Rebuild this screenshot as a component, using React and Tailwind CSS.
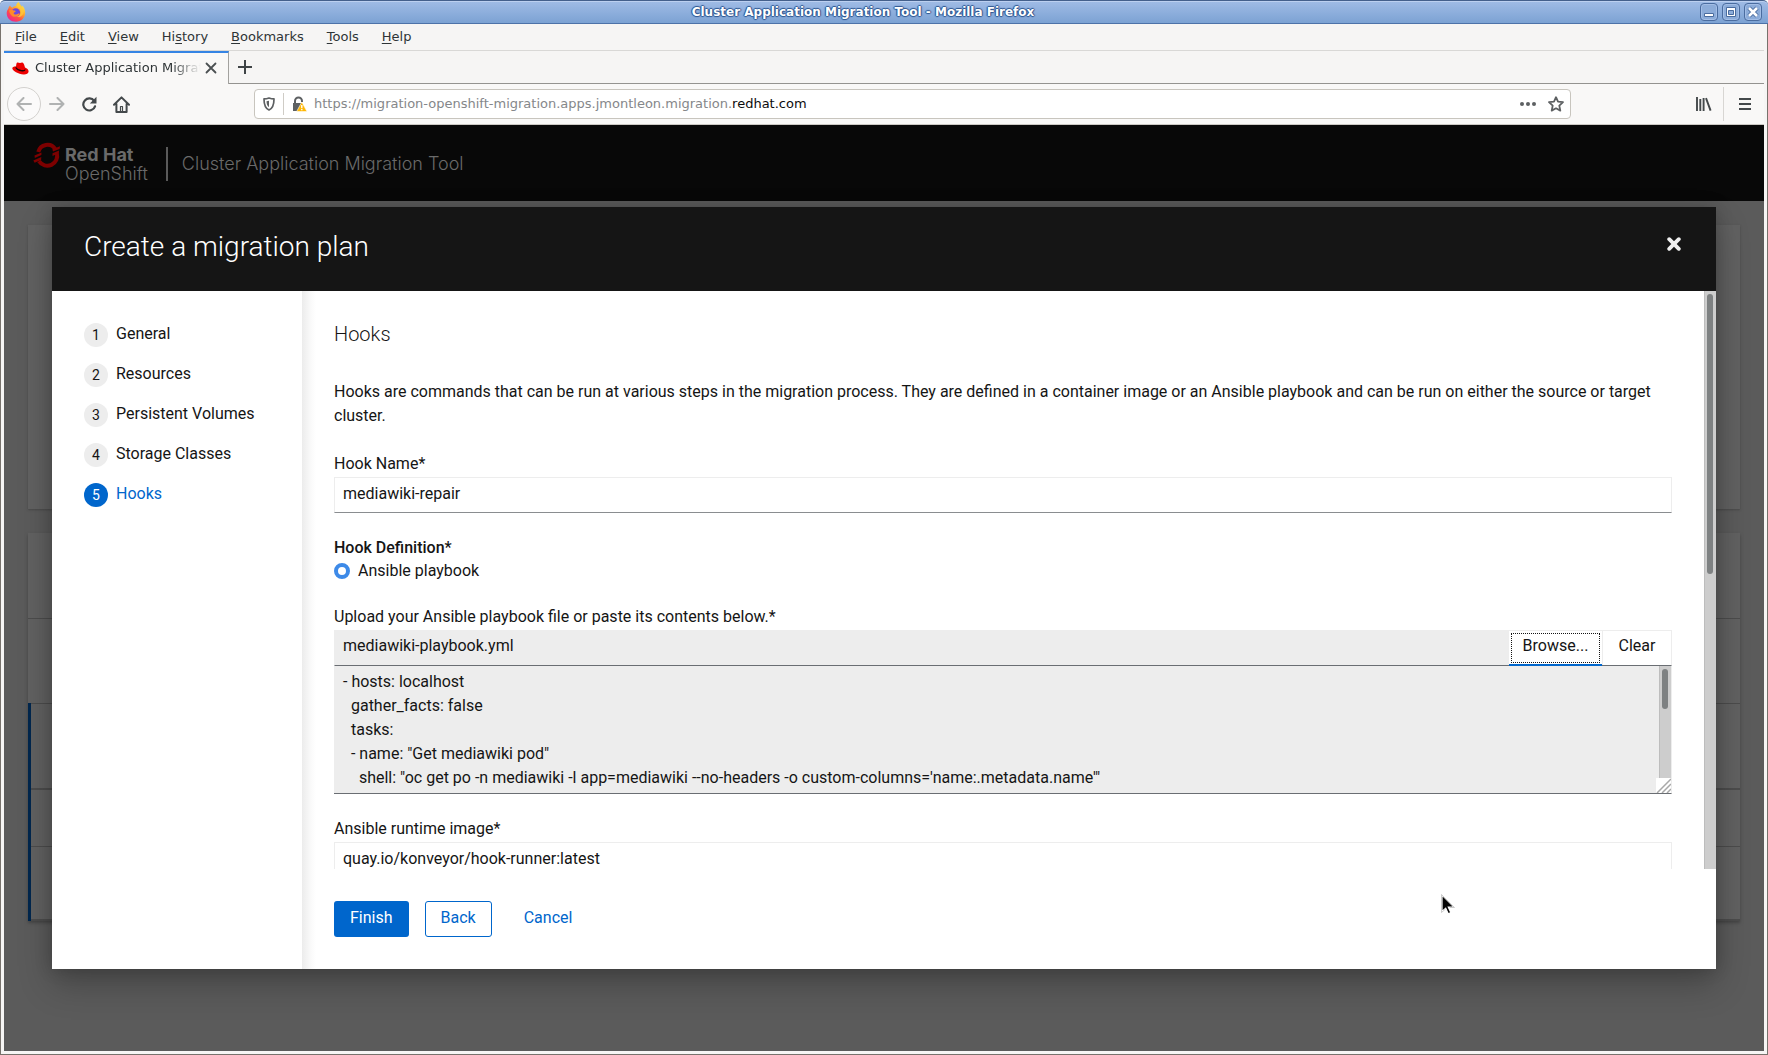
import { useState } from "react";

const menus = [
  ["", "F", "ile"],
  ["", "E", "dit"],
  ["", "V", "iew"],
  ["Hi", "s", "tory"],
  ["", "B", "ookmarks"],
  ["", "T", "ools"],
  ["", "H", "elp"],
];

const steps = ["General", "Resources", "Persistent Volumes", "Storage Classes", "Hooks"];

const playbook = `- hosts: localhost
  gather_facts: false
  tasks:
  - name: "Get mediawiki pod"
    shell: "oc get po -n mediawiki -l app=mediawiki --no-headers -o custom-columns='name:.metadata.name'"`;

function FirefoxLogo() {
  return (
    <svg width="20" height="20" viewBox="0 0 20 20" aria-hidden="true">
      <defs>
        <linearGradient id="flame" x1="0.85" y1="0.1" x2="0.25" y2="0.95">
          <stop offset="0" stopColor="#fff04a" />
          <stop offset="0.4" stopColor="#ffa22c" />
          <stop offset="0.7" stopColor="#ff4d47" />
          <stop offset="1" stopColor="#f0288c" />
        </linearGradient>
        <radialGradient id="globe" cx="0.5" cy="0.4" r="0.6">
          <stop offset="0" stopColor="#5a55ea" />
          <stop offset="1" stopColor="#8a38c8" />
        </radialGradient>
      </defs>
      <path d="M4 3.6C3 4.700 2.600 5.500 2.400 6.500 1.300 8 .700 9.600.700 11.200c0 5 4.200 8.500 9.300 8.500s9.200-3.900 9.200-9c0-3-1.300-5.700-3.200-7.100.2.900.2 1.500 0 2.200C15.200 3.600 12.900 2.400 12.700 0c-1.600.900-2.500 2.400-2.500 4.100-2 0-3.200.900-3.700 1.600C5.600 5.500 4.500 4.700 4 3.600z" fill="url(#flame)" />
      <circle cx="9.800" cy="10.500" r="4.300" fill="url(#globe)" />
      <path d="M3 8.300c1.800-.9 3.600-.6 4.600.2 1 .1 2.100.3 2.100.8 0 .8-1.700 1-2 1.700-.2 1 1 1.700 2.300 1.500 1.600-.2 2.300-1.300 3.700-.8-1 2.800-4.600 4-7.300 2.500C4.300 12.900 3.300 10.600 3 8.300z" fill="#ff8a2a" />
      <path d="M10.200 4.300c2.600.8 4.500 2.700 4.500 5.600 0 2.300-1.600 4.400-4 4.900 4.400 1.300 7.400-2.500 7-6.300C17.400 5.400 14.900 3.400 12.700.5c-1.400 1-2.300 2.200-2.500 3.800z" fill="#ffc93a" opacity=".8" />
    </svg>
  );
}

function Fedora() {
  return (
    <svg width="17" height="13" viewBox="0 0 17 13" aria-hidden="true">
      <path d="M5.200.6C6 .2 7 1 8 1c1 0 1.700-.7 2.800-.2 1.200.6 1.800 3 2.200 4.800 2 .6 3.700 2.200 3.600 4-.1 2.200-2.400 3-5 2.900C6.500 12.300.300 8.800.300 6.300c0-1.500 1.800-1.900 3.700-1.800C4.200 3 4.400 1 5.200.6z" fill="#e00" />
      <path d="M4 4.300c-.4 1.600 3.300 3.600 6.400 3.800 1.700.1 2.800-.4 2.600-1.500l.4 1.400c0 1.100-1.400 1.600-3.300 1.400C6.700 9 3.200 6.800 3.500 5.400z" fill="#200" />
    </svg>
  );
}

function OpenShiftMark() {
  return (
    <svg width="29" height="28" viewBox="0 0 29 28" fill="none" aria-hidden="true">
      <path d="M6.300 11A9.400 9.400 0 0 1 23.300 8" stroke="#7d0000" strokeWidth="4" />
      <path d="M24.800 12A9.900 9.900 0 0 1 7 20.200" stroke="#7d0000" strokeWidth="4" />
      <path d="M20.400 8.300l7.600-3-.4 2.600-6.600 2.600zM2.500 14.400l7-3-.1 2.700-6.600 2.900zM20.500 12.300l6.600-2.700-.3 2.600-6.300 2.700zM1.300 19.400l8-3.300-.2 2.900-6.500 2.800z" fill="#7d0000" />
    </svg>
  );
}

function WindowButton({ label, children }) {
  return (
    <button aria-label={label} className="grid size-[18px] place-items-center rounded-[4px] border border-[#4a6c9f] bg-[#8cacd9] shadow-[inset_0_0_0_1px_#a3bee6]">
      <svg width="12" height="12" viewBox="0 0 12 12" fill="none">{children}</svg>
    </button>
  );
}

function TitleBar() {
  return (
    <div className="flex h-6 shrink-0 items-center justify-between rounded-t-[5px] border-t border-b border-t-[#44608c] border-b-[#4d72a8] bg-linear-to-b from-[#a0bce6] to-[#7ca2d3] px-[6px] shadow-[inset_0_1px_0_#bcd0f0]">
      <FirefoxLogo />
      <div className="text-xs font-bold text-white [text-shadow:0_1px_1px_#2c5590,0_-1px_1px_#2c5590,1px_0_1px_#2c5590,-1px_0_1px_#2c5590]">
        Cluster Application Migration Tool - Mozilla Firefox
      </div>
      <div className="flex gap-1">
        <WindowButton label="Minimize">
          <path d="M1.500 7.500h9v3h-9z" fill="#fff" stroke="#4a6c9f" />
        </WindowButton>
        <WindowButton label="Maximize">
          <path d="M1.500 1.500h9v9h-9z" fill="#fff" stroke="#4a6c9f" />
          <path d="M3.500 4.500h5v4h-5z" fill="#8cacd9" stroke="#4a6c9f" />
        </WindowButton>
        <WindowButton label="Close">
          <path d="M2 2l8 8M10 2l-8 8" stroke="#4a6c9f" strokeWidth="4.500" />
          <path d="M2 2l8 8M10 2l-8 8" stroke="#fff" strokeWidth="2.600" />
        </WindowButton>
      </div>
    </div>
  );
}

function MenuBar() {
  return (
    <nav className="flex h-[27px] shrink-0 items-center gap-[23px] border-b border-[#d9d8d6] pl-[11px] text-[13px] text-[#2e3436]">
      {menus.map(([before, key, after]) => (
        <button key={before + key + after}>
          {before}
          <span className="underline underline-offset-2">{key}</span>
          {after}
        </button>
      ))}
    </nav>
  );
}

function TabStrip() {
  return (
    <div className="flex h-[33px] shrink-0">
      <div className="flex w-[225px] items-center border-t-2 border-r border-t-[#3584e4] border-r-[#a3a29f] bg-[#f9f8f7] pb-px pl-2 text-[13px] text-[#2e3436]">
        <Fedora />
        <span className="ml-[6px] w-[166px] overflow-hidden whitespace-nowrap [mask-image:linear-gradient(to_right,black_82%,transparent_100%)]">
          Cluster Application Migration Tool
        </span>
        <button aria-label="Close tab" className="ml-1">
          <svg width="12" height="12" viewBox="0 0 12 12" stroke="#4b5052" strokeWidth="1.800" strokeLinecap="round">
            <path d="M1.500 1.500l9 9M10.500 1.500l-9 9" />
          </svg>
        </button>
      </div>
      <div className="flex flex-1 items-center border-b border-[#949390] pl-[9px]">
        <button aria-label="New tab">
          <svg width="14" height="14" viewBox="0 0 14 14" stroke="#3f4446" strokeWidth="2">
            <path d="M7 0v14M0 7h14" />
          </svg>
        </button>
      </div>
    </div>
  );
}

function Toolbar() {
  return (
    <div className="flex h-[41px] shrink-0 items-center border-b border-[#ccc9c4] bg-[#f9f8f7]">
      <div className="flex w-[250px] shrink-0 items-center pl-[3px]">
        <button aria-label="Back" className="grid size-[34px] place-items-center rounded-full border border-[#d3d1ce] bg-[#fbfafa]">
          <svg width="16" height="14" viewBox="0 0 16 14" fill="none" stroke="#b0b2b2" strokeWidth="2" strokeLinecap="round" strokeLinejoin="round">
            <path d="M15 7H1.500M7.500 1l-6 6 6 6" />
          </svg>
        </button>
        <button aria-label="Forward" className="ml-2">
          <svg width="16" height="14" viewBox="0 0 16 14" fill="none" stroke="#b0b2b2" strokeWidth="2" strokeLinecap="round" strokeLinejoin="round">
            <path d="M1 7h13.500M8.500 1l6 6-6 6" />
          </svg>
        </button>
        <button aria-label="Reload" className="ml-4">
          <svg width="16" height="16" viewBox="0 0 16 16" fill="none">
            <path d="M13.200 5A6 6 0 1 0 14 10.300" stroke="#44494b" strokeWidth="2.200" strokeLinecap="round" />
            <path d="M15.500.800v6.700H8.800z" fill="#44494b" />
          </svg>
        </button>
        <button aria-label="Home" className="ml-4">
          <svg width="17" height="17" viewBox="0 0 17 17" fill="none" stroke="#44494b" strokeWidth="2" strokeLinecap="round" strokeLinejoin="round">
            <path d="M1 8.800l7.500-7.400 7.500 7.400M3.400 8v8h10.200V8" />
            <path d="M7.500 10.500h2v5h-2z" strokeWidth="1.200" />
          </svg>
        </button>
      </div>
      <div className="flex h-[30px] flex-1 items-center rounded-[4px] border border-[#c8c5be] bg-white pr-[6px] pl-2">
        <svg width="12" height="14" viewBox="0 0 12 14" fill="none" aria-hidden="true">
          <path d="M6 1c1.700.6 3.300.9 5 .9 0 5-.5 9-5 11.100C1.500 10.900 1 6.900 1 1.900c1.700 0 3.300-.3 5-.9z" stroke="#5d6062" strokeWidth="1.700" strokeLinejoin="round" />
          <path d="M6 3.700v6.600C4 8.800 3.600 6.700 3.500 4.200z" fill="#5d6062" />
        </svg>
        <div className="mx-2 h-[22px] w-px bg-[#cfccc6]" />
        <svg width="15" height="16" viewBox="0 0 15 16" fill="none" aria-hidden="true">
          <path d="M3 8V5a3.500 3.500 0 0 1 7 0v1" stroke="#5d6062" strokeWidth="2" />
          <path d="M1 7h8v8H1z" fill="#5d6062" />
          <path d="M9.800 6L15 15.600H4.600z" fill="#ffb703" stroke="#fff" strokeWidth=".6" />
          <path d="M9.800 9v3.200M9.800 13v1.300" stroke="#fff" strokeWidth="1.400" />
        </svg>
        <div className="ml-[7px] flex-1 text-[13px] whitespace-nowrap text-[#85878a]">
          https://migration-openshift-migration.apps.jmontleon.migration.<span className="text-[#0c0c0d]">redhat.com</span>
        </div>
        <button aria-label="Page actions">
          <svg width="16" height="4" viewBox="0 0 16 4" fill="#5d6062">
            <circle cx="2" cy="2" r="2" />
            <circle cx="8" cy="2" r="2" />
            <circle cx="14" cy="2" r="2" />
          </svg>
        </button>
        <button aria-label="Bookmark this page" className="ml-3">
          <svg width="16" height="16" viewBox="0 0 16 16" fill="none" stroke="#5d6062" strokeWidth="1.800" strokeLinejoin="round">
            <path d="M8 1.200l2 4.500 5 .5-3.700 3.400 1 5L8 12.300l-4.300 2.300 1-5L1 6.200l5-.5z" />
          </svg>
        </button>
      </div>
      <div className="flex w-[193px] shrink-0 items-center justify-end pr-[13px]">
        <button aria-label="Library">
          <svg width="16" height="14" viewBox="0 0 16 14" stroke="#44494b" strokeWidth="1.900">
            <path d="M1 0v14M4.300 2v12M7.600 1v13M10 1.200l4.600 12.500" />
          </svg>
        </button>
        <div className="mr-[15px] ml-[11px] h-[34px] w-px bg-[#d8d6d3]" />
        <button aria-label="Open menu">
          <svg width="12" height="12" viewBox="0 0 12 12" fill="#44494b">
            <path d="M0 0h12v2H0zM0 5h12v2H0zM0 10h12v2H0z" />
          </svg>
        </button>
      </div>
    </div>
  );
}

function Backdrop() {
  return (
    <div className="flex h-full flex-col bg-[#5b5b5b]" aria-hidden="true">
      <div className="flex h-[76px] shrink-0 items-start bg-[#080808] pt-4 pl-7 font-[Inter,sans-serif] text-[#6a6a6a]">
        <OpenShiftMark />
        <div className="ml-1 pt-1 text-lg leading-[19px]">
          <div className="font-bold">Red Hat</div>
          <div className="font-light">OpenShift</div>
        </div>
        <div className="mt-[6px] ml-[18px] h-[34px] w-[2px] bg-[#5a5a5a]" />
        <div className="mt-[9px] ml-[14px] text-lg leading-[28px] font-light">Cluster Application Migration Tool</div>
      </div>
      <div className="mx-6 mt-6 h-[284px] shrink-0 bg-[#616161] shadow-[0_1px_2px_#484848]" />
      <div className="mx-6 mt-6 flex h-[388px] shrink-0 flex-col bg-[#616161] shadow-[0_2px_3px_#444]">
        <div className="h-[86px] border-b border-[#4c4c4c]" />
        <div className="h-[84px]" />
        <div className="flex flex-1 flex-col border-l-[3px] border-[#00264d]">
          <div className="h-[87px] border-t border-b-2 border-[#4c4c4c]" />
          <div className="h-[57px] border-b border-[#4c4c4c]" />
          <div className="flex-1 border-b-2 border-[#4c4c4c]" />
        </div>
      </div>
    </div>
  );
}

function Field({ id, label, value, onChange }) {
  return (
    <div>
      <label htmlFor={id} className="block leading-6">{label}</label>
      <input
        id={id}
        value={value}
        onChange={(e) => onChange(e.target.value)}
        className="mt-px block h-9 w-full border border-[#ededed] border-b-[#8a8d90] bg-white px-2 pb-1 outline-none"
      />
    </div>
  );
}

function WizardNav() {
  return (
    <nav className="w-[250px] shrink-0 px-8 pt-8">
      <ol className="flex flex-col gap-4">
        {steps.map((step, i) => {
          const current = i === steps.length - 1;
          return (
            <li key={step}>
              <button className="flex items-start gap-2" aria-current={current ? "step" : undefined}>
                <span className={current ? "grid size-6 place-items-center rounded-full bg-[#06c] text-sm text-white" : "grid size-6 place-items-center rounded-full bg-[#ededed] text-sm"}>
                  {i + 1}
                </span>
                <span className={current ? "-mt-px leading-6 text-[#06c]" : "-mt-px leading-6 text-[#151515]"}>{step}</span>
              </button>
            </li>
          );
        })}
      </ol>
    </nav>
  );
}

function HooksForm() {
  const [name, setName] = useState("mediawiki-repair");
  const [image, setImage] = useState("quay.io/konveyor/hook-runner:latest");
  const [contents, setContents] = useState(playbook);
  return (
    <div className="flex min-h-0 flex-1">
      <form className="flex min-w-0 flex-1 flex-col overflow-hidden px-8 pt-7">
        <h2 className="text-xl leading-[30px] font-light">Hooks</h2>
        <p className="mt-[31px] leading-6">
          Hooks are commands that can be run at various steps in the migration process. They are defined in a container image or an Ansible playbook and can be run on either the source or target cluster.
        </p>
        <div className="mt-6">
          <Field id="hook-name" label="Hook Name*" value={name} onChange={setName} />
        </div>
        <fieldset className="mt-[23px]">
          <legend className="leading-6 font-medium">Hook Definition*</legend>
          <label className="flex items-center gap-2 leading-[22px]">
            <input type="radio" name="definition" defaultChecked className="size-4 appearance-none rounded-full border-4 border-[#3d8ae8] bg-white" />
            Ansible playbook
          </label>
        </fieldset>
        <label htmlFor="playbook" className="mt-[23px] block leading-6">Upload your Ansible playbook file or paste its contents below.*</label>
        <div className="mt-px flex h-9 shrink-0 border border-[#ededed] border-b-[#6a6e73]">
          <input aria-label="Playbook file name" readOnly value="mediawiki-playbook.yml" className="min-w-0 flex-1 bg-[#ededed] px-2 pb-1 outline-none" />
          <button type="button" className="-mb-px w-[93px] border-b-2 border-[#06c] bg-white p-[2px]">
            <span className="flex h-[30px] items-center justify-center border border-dotted border-[#151515] pb-1">Browse...</span>
          </button>
          <button type="button" className="w-[69px] border-l border-[#ededed] pb-1">Clear</button>
        </div>
        <div className="relative shrink-0">
          <textarea
            id="playbook"
            rows={5}
            value={contents}
            onChange={(e) => setContents(e.target.value)}
            className="block h-[128px] w-full resize-none overflow-hidden border-r border-b border-r-[#ededed] border-b-[#6a6e73] bg-[#ededed] px-[9px] pt-1 leading-6 whitespace-pre outline-none"
          />
          <div className="absolute top-0 right-px h-28 w-3 border-l border-[#bdbdbd] bg-[#cdcdcd] py-[3px] pl-[2px]">
            <div className="h-10 w-[6px] rounded-full bg-[#7e8182]" />
          </div>
          <svg className="absolute right-px bottom-px bg-white" width="15" height="15" viewBox="0 0 15 15" stroke="#a8a8a8" strokeWidth="1.500" aria-hidden="true">
            <path d="M1 15L15 1M6 15l9-9M11 15l4-4" />
          </svg>
        </div>
        <div className="mt-[23px] shrink-0">
          <Field id="runtime-image" label="Ansible runtime image*" value={image} onChange={setImage} />
        </div>
      </form>
      <div className="w-3 shrink-0 border-l border-[#bdbdbd] bg-[#cdcdcd] py-[3px] pl-[2px]">
        <div className="h-[49%] w-[6px] rounded-full bg-[#7e8182]" />
      </div>
    </div>
  );
}

function Wizard() {
  return (
    <div role="dialog" aria-label="Create a migration plan" className="flex flex-1 flex-col bg-white font-[Roboto,sans-serif] text-base text-[#151515] shadow-[0_16px_32px_rgba(3,3,3,0.24),0_0_16px_rgba(3,3,3,0.2)]">
      <header className="flex h-[84px] shrink-0 items-start justify-between bg-[#151515] pt-[19px] pr-[35px] pl-8 text-white">
        <h1 className="text-[28px] leading-[42px] font-light">Create a migration plan</h1>
        <button aria-label="Close" className="mt-[11px]">
          <svg width="14" height="14" viewBox="0 0 14 14" stroke="#f0f0f0" strokeWidth="3.800" strokeLinecap="round">
            <path d="M2.200 2.200l9.600 9.600M11.800 2.200l-9.600 9.600" />
          </svg>
        </button>
      </header>
      <div className="flex min-h-0 flex-1">
        <WizardNav />
        <div className="flex min-w-0 flex-1 flex-col bg-[linear-gradient(to_right,#ececec,#fafafa_9px,transparent_14px)]">
          <HooksForm />
          <footer className="flex h-[100px] shrink-0 items-start gap-4 px-8 pt-8">
            <button className="h-9 rounded-[3px] bg-[#06c] px-4 pb-[3px] text-white">Finish</button>
            <button className="h-9 rounded-[3px] border border-[#06c] px-[15px] pb-[3px] text-[#06c]">Back</button>
            <button className="h-9 px-4 pb-[3px] text-[#06c]">Cancel</button>
          </footer>
        </div>
      </div>
    </div>
  );
}

export default function App() {
  return (
    <div className="flex h-screen flex-col overflow-hidden bg-white font-['DejaVu_Sans',sans-serif]">
      <TitleBar />
      <div className="flex min-h-0 flex-1 flex-col border-r border-b border-l border-[#77726c] bg-[#f6f5f4] px-[3px] pb-[3px]">
        <MenuBar />
        <TabStrip />
        <Toolbar />
        <main className="relative min-h-0 flex-1 overflow-hidden">
          <Backdrop />
          <div className="absolute inset-0 flex px-12 py-[82px]">
            <Wizard />
          </div>
          <svg className="absolute right-[309px] bottom-[136px]" width="14" height="21" viewBox="0 0 14 21" aria-hidden="true">
            <path d="M1 1v16.500l3.700-3.300 2.500 5.500 2.600-1.200-2.500-5.300H13z" fill="#050505" stroke="#fff" strokeWidth="1.200" />
            <path d="M.5.500v18l4-3.500M.5.500l13 13H9" fill="none" stroke="#b9b9b9" strokeWidth=".7" />
          </svg>
        </main>
      </div>
    </div>
  );
}
